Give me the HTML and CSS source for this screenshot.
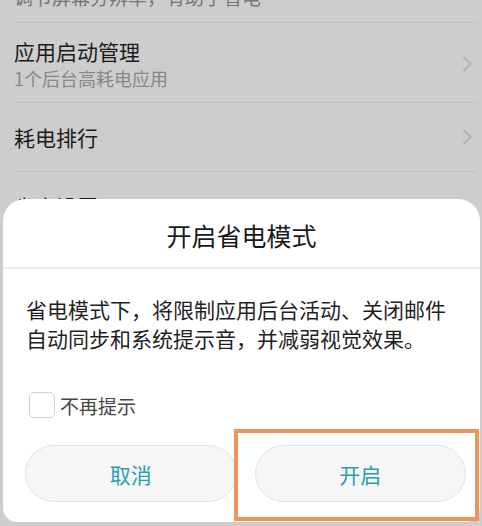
FILE: index.html
```html
<!DOCTYPE html>
<html lang="zh-CN">
<head>
<meta charset="utf-8">
<link rel="stylesheet" href="styles.css">
</head>
<body>
<div class="screen">
  <div class="list">
    <div class="row partial"><span class="sub">调节屏幕分辨率，有助于省电</span></div>
    <div class="row two">
      <div class="texts">
        <div class="title">应用启动管理</div>
        <div class="sub">1个后台高耗电应用</div>
      </div>
      <svg class="chev" width="10" height="16" viewBox="0 0 10 16"><polyline points="1.5,1 8.5,8 1.5,15" fill="none" stroke="#ababab" stroke-width="1.6"/></svg>
    </div>
    <div class="row one">
      <div class="title">耗电排行</div>
      <svg class="chev" width="10" height="16" viewBox="0 0 10 16"><polyline points="1.5,1 8.5,8 1.5,15" fill="none" stroke="#ababab" stroke-width="1.6"/></svg>
    </div>
    <div class="row one"><div class="title">省电设置</div></div>
  </div>

  <div class="dialog">
    <div class="dlg-title">开启省电模式</div>
    <div class="dlg-body">
      <p class="msg">省电模式下，将限制应用后台活动、关闭邮件<br>自动同步和系统提示音，并减弱视觉效果。</p>
      <label class="check"><span class="box"></span><span class="check-label">不再提示</span></label>
    </div>
    <div class="actions">
      <button class="btn">取消</button>
      <button class="btn">开启</button>
    </div>
  </div>
  <div class="highlight"></div>
</div>
</body>
</html>
```

FILE: styles.css
```css
* { box-sizing: border-box; }
html, body { margin: 0; padding: 0; }
body {
  width: 482px;
  height: 526px;
  overflow: hidden;
  background: #cdcdcd;
  font-family: "Noto Sans CJK SC", "Noto Sans", sans-serif;
}
.screen {
  position: relative;
  width: 482px;
  height: 526px;
  overflow: hidden;
}
.list {
  padding: 0 5px 0 14px;
}
.row {
  display: flex;
  align-items: center;
  justify-content: space-between;
  border-bottom: 1px solid #bfbfbf;
}
.row.partial {
  margin-top: -14px;
  height: 37px;
  line-height: 22px;
  align-items: flex-start;
}
.row.two {
  padding: 15px 0 13px;
}
.row.one {
  padding: 21px 0 21px;
}
.title {
  font-size: 21px;
  line-height: 26px;
  color: #1b1b1b;
}
.sub {
  font-size: 18px;
  line-height: 22px;
  color: #888;
  margin-top: 3px;
}
.row.partial .sub { margin-top: 0; font-size: 19px; color: #777; }
.chev { margin-right: 5px; flex: none; }

.dialog {
  position: absolute;
  left: 3px;
  right: 2px;
  top: 199px;
  bottom: 4px;
  background: #fff;
  border-radius: 22px 22px 14px 14px;
  display: flex;
  flex-direction: column;
}
.dlg-title {
  text-align: center;
  font-size: 25px;
  line-height: 30px;
  padding: 21px 0 17px;
  color: #1a1a1a;
  border-bottom: 2px solid #ececec;
}
.dlg-body {
  padding: 26px 20px 0 23px;
}
.msg {
  margin: 0;
  font-size: 21px;
  line-height: 29px;
  color: #1f1f1f;
  white-space: nowrap;
}
.check {
  display: flex;
  align-items: center;
  margin-top: 39px;
  margin-left: 3px;
  height: 26px;
}
.box {
  width: 26px;
  height: 26px;
  border: 1.5px solid #cfcfcf;
  border-radius: 5px;
  background: #fff;
  flex: none;
}
.check-label {
  margin-left: 5px;
  font-size: 19px;
  color: #444;
}
.actions {
  display: flex;
  gap: 18px;
  padding: 27px 14px 0 22px;
}
.btn {
  flex: 1;
  height: 57px;
  border-radius: 29px;
  border: 1px solid #e2e2e2;
  background: #f6f6f6;
  color: #2aa0ae;
  font-family: "Noto Sans CJK SC", "Noto Sans", sans-serif;
  font-size: 21px;
  padding: 0;
}
.highlight {
  position: absolute;
  left: 234px;
  top: 429px;
  width: 245px;
  height: 92px;
  border: 4px solid #f0955a;
}
```
